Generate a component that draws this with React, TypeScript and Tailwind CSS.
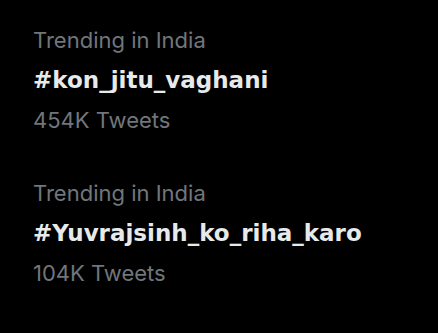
import React from "react";

const items = [
  { tag: "#kon_jitu_vaghani", count: "454K Tweets" },
  { tag: "#Yuvrajsinh_ko_riha_karo", count: "104K Tweets" },
];

export default function App() {
  return (
    <div className="w-[438px] h-[333px] bg-black overflow-hidden pl-[33px] pt-[20px] flex flex-col gap-[33px] font-['Inter','Noto_Sans',sans-serif]">
      {items.map((it) => (
        <div key={it.tag} className="flex flex-col">
          <div className="text-[22px] leading-[40px] text-[#71767b] whitespace-nowrap">Trending in India</div>
          <div className="text-[23px] leading-[40px] font-bold text-[#e7e9ea] whitespace-nowrap font-['DejaVu_Sans',sans-serif]">
            {it.tag}
          </div>
          <div className="text-[22px] leading-[40px] text-[#71767b] whitespace-nowrap">{it.count}</div>
        </div>
      ))}
    </div>
  );
}
